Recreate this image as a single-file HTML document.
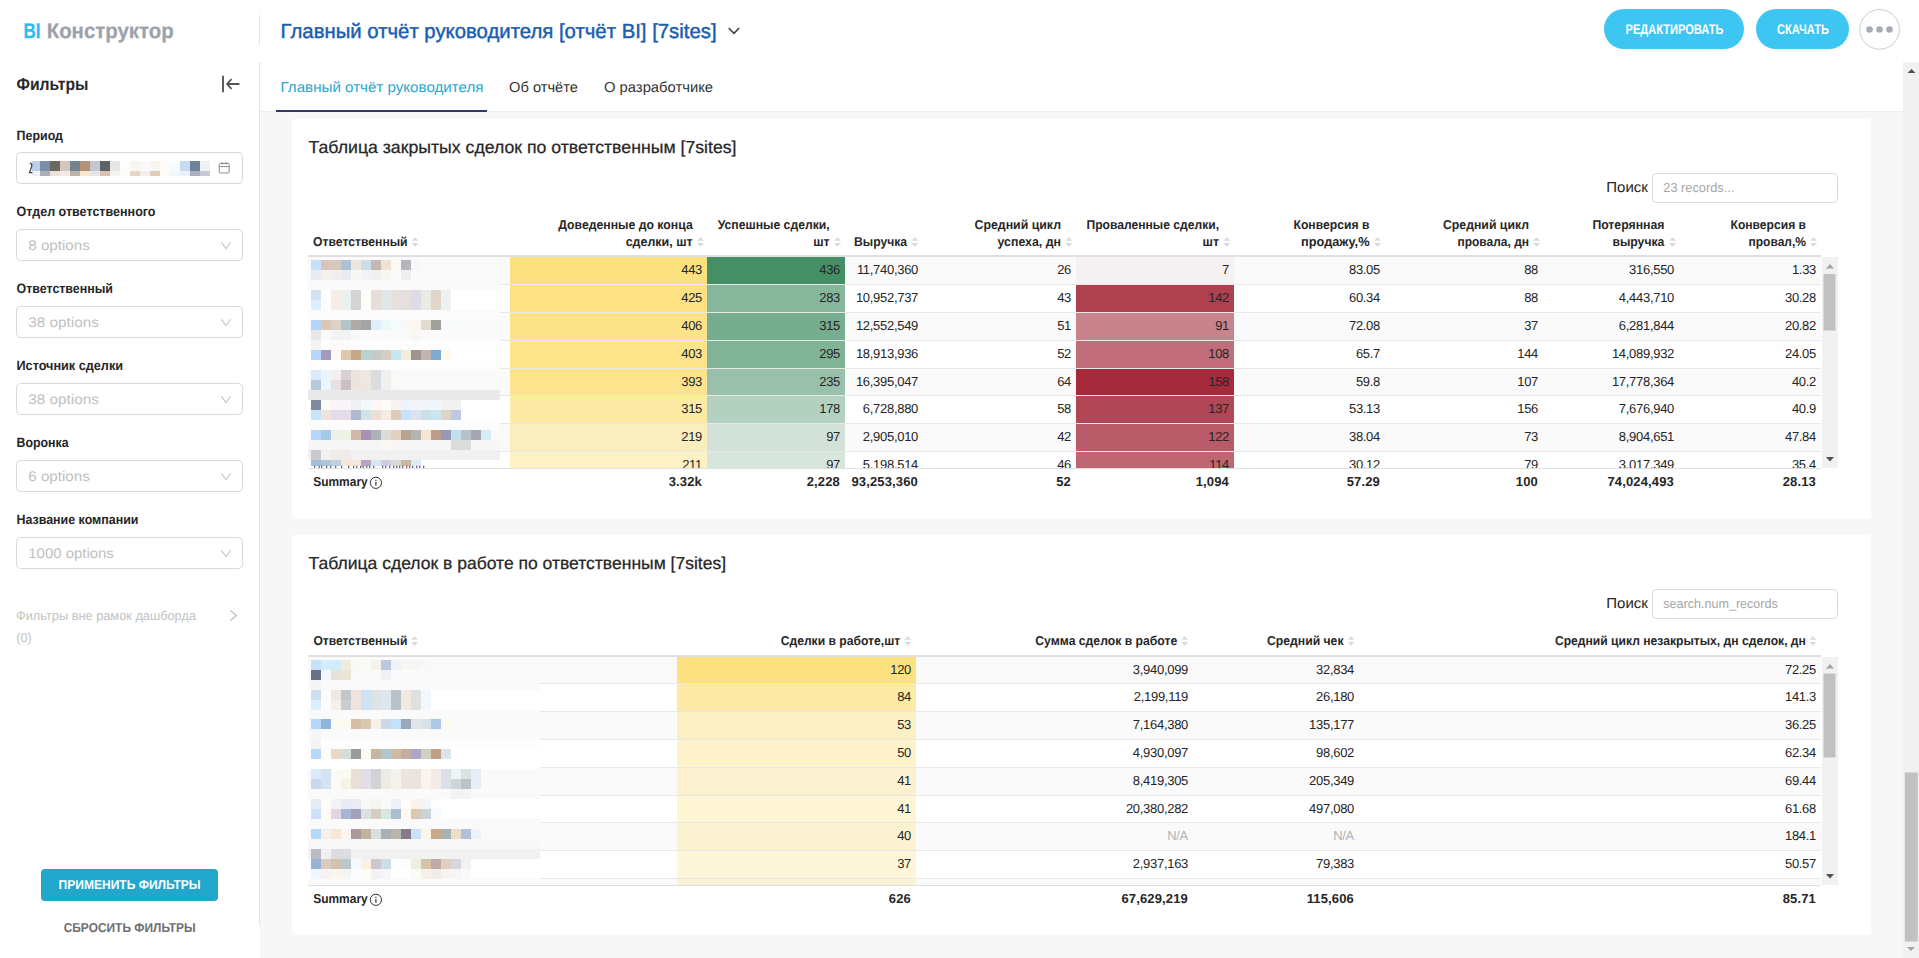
<!DOCTYPE html>
<html lang="ru"><head><meta charset="utf-8"><title>BI Конструктор</title>
<style>
html,body{margin:0;padding:0;width:1919px;height:958px;overflow:hidden;background:#fff}
svg{display:block;font-family:'Liberation Sans', sans-serif;text-rendering:geometricPrecision}
</style></head><body>
<svg width="1919" height="958" viewBox="0 0 1919 958">
<rect x="0" y="0" width="1919" height="958" fill="#ffffff"/>
<rect x="260" y="112" width="1643" height="846" fill="#f7f7f7"/>
<line x1="260" y1="111.5" x2="1903" y2="111.5" stroke="#efefef" stroke-width="1"/>
<rect x="276" y="110" width="211" height="2" fill="#2f3a6b"/>
<line x1="259.5" y1="62" x2="259.5" y2="925" stroke="#e3e3e3" stroke-width="1"/>
<line x1="259.5" y1="15" x2="259.5" y2="45" stroke="#e3e3e3" stroke-width="1"/>
<text x="23.6" y="38" font-size="21.2" fill="#2cbcef" font-weight="700" textLength="17" lengthAdjust="spacingAndGlyphs" stroke="#2cbcef" stroke-width="0.25">BI</text>
<text x="46.7" y="38" font-size="21.2" fill="#9ca2aa" font-weight="700" textLength="127" lengthAdjust="spacingAndGlyphs" stroke="#9ca2aa" stroke-width="0.25">Конструктор</text>
<text x="280.6" y="38.1" font-size="20.4" fill="#1b5daf" textLength="436" lengthAdjust="spacingAndGlyphs" stroke="#1b5daf" stroke-width="0.45">Главный отчёт руководителя [отчёт BI] [7sites]</text>
<path d="M729.2 28.5 L734 33.3 L738.7 28.5" fill="none" stroke="#3d4856" stroke-width="1.7" stroke-linecap="round" stroke-linejoin="round"/>
<rect x="1604" y="9" width="140" height="40" fill="#3ec6f3" rx="20"/>
<text x="1625.5" y="34.3" font-size="14" fill="#ffffff" font-weight="700" textLength="98" lengthAdjust="spacingAndGlyphs">РЕДАКТИРОВАТЬ</text>
<rect x="1756" y="9" width="93" height="40" fill="#3ec6f3" rx="20"/>
<text x="1777" y="34.3" font-size="14" fill="#ffffff" font-weight="700" textLength="52" lengthAdjust="spacingAndGlyphs">СКАЧАТЬ</text>
<circle cx="1879.6" cy="29.4" r="19.8" fill="#fff" stroke="#c9ced4" stroke-width="1"/>
<circle cx="1869.5" cy="29.5" r="3.3" fill="#a6acb3"/>
<circle cx="1879.5" cy="29.5" r="3.3" fill="#a6acb3"/>
<circle cx="1889.5" cy="29.5" r="3.3" fill="#a6acb3"/>
<text x="16.5" y="90.3" font-size="17.5" fill="#282828" font-weight="700" textLength="72" lengthAdjust="spacingAndGlyphs">Фильтры</text>
<path d="M223 76.5 L223 91.5" fill="none" stroke="#555" stroke-width="1.9" stroke-linecap="round"/>
<path d="M231 79.7 L227 84 L231 88.3 M227 84 L238.8 84" fill="none" stroke="#555" stroke-width="1.8" stroke-linecap="round" stroke-linejoin="round"/>
<text x="16.5" y="139.6" font-size="13.5" fill="#262626" font-weight="700" textLength="46.5" lengthAdjust="spacingAndGlyphs">Период</text>
<rect x="16.5" y="152.5" width="226" height="31" fill="#ffffff" rx="4" stroke="#d9d9d9" stroke-width="1"/>
<text x="16.5" y="215.8" font-size="13.5" fill="#262626" font-weight="700" textLength="139" lengthAdjust="spacingAndGlyphs">Отдел ответственного</text>
<rect x="16.5" y="229.5" width="226" height="31" fill="#ffffff" rx="4" stroke="#d9d9d9" stroke-width="1"/>
<text x="28.3" y="250" font-size="14" fill="#bfbfbf" textLength="61.5" lengthAdjust="spacingAndGlyphs">8 options</text>
<path d="M221.3 242.3 L226 248.6 L230.6 242.3" fill="none" stroke="#c4c4c4" stroke-width="1.1"/>
<text x="16.5" y="293.1" font-size="13.5" fill="#262626" font-weight="700" textLength="96.5" lengthAdjust="spacingAndGlyphs">Ответственный</text>
<rect x="16.5" y="306.5" width="226" height="31" fill="#ffffff" rx="4" stroke="#d9d9d9" stroke-width="1"/>
<text x="28.3" y="327" font-size="14" fill="#bfbfbf" textLength="70.5" lengthAdjust="spacingAndGlyphs">38 options</text>
<path d="M221.3 319.3 L226 325.6 L230.6 319.3" fill="none" stroke="#c4c4c4" stroke-width="1.1"/>
<text x="16.5" y="370.2" font-size="13.5" fill="#262626" font-weight="700" textLength="106.5" lengthAdjust="spacingAndGlyphs">Источник сделки</text>
<rect x="16.5" y="383.5" width="226" height="31" fill="#ffffff" rx="4" stroke="#d9d9d9" stroke-width="1"/>
<text x="28.3" y="404" font-size="14" fill="#bfbfbf" textLength="70.5" lengthAdjust="spacingAndGlyphs">38 options</text>
<path d="M221.3 396.3 L226 402.6 L230.6 396.3" fill="none" stroke="#c4c4c4" stroke-width="1.1"/>
<text x="16.5" y="447.2" font-size="13.5" fill="#262626" font-weight="700" textLength="52" lengthAdjust="spacingAndGlyphs">Воронка</text>
<rect x="16.5" y="460.5" width="226" height="31" fill="#ffffff" rx="4" stroke="#d9d9d9" stroke-width="1"/>
<text x="28.3" y="481" font-size="14" fill="#bfbfbf" textLength="61.5" lengthAdjust="spacingAndGlyphs">6 options</text>
<path d="M221.3 473.3 L226 479.6 L230.6 473.3" fill="none" stroke="#c4c4c4" stroke-width="1.1"/>
<text x="16.5" y="524.1" font-size="13.5" fill="#262626" font-weight="700" textLength="122" lengthAdjust="spacingAndGlyphs">Название компании</text>
<rect x="16.5" y="537.5" width="226" height="31" fill="#ffffff" rx="4" stroke="#d9d9d9" stroke-width="1"/>
<text x="28.3" y="558" font-size="14" fill="#bfbfbf" textLength="85.5" lengthAdjust="spacingAndGlyphs">1000 options</text>
<path d="M221.3 550.3 L226 556.6 L230.6 550.3" fill="none" stroke="#c4c4c4" stroke-width="1.1"/>
<rect x="32" y="161" width="8" height="10" fill="#b9d0e8"/>
<rect x="32" y="171" width="8" height="5" fill="#eef2f6"/>
<rect x="40" y="161" width="10" height="10" fill="#7b8ea8"/>
<rect x="40" y="171" width="10" height="5" fill="#aeadb8"/>
<rect x="50" y="161" width="10" height="10" fill="#6b6762"/>
<rect x="50" y="171" width="10" height="5" fill="#ede3da"/>
<rect x="60" y="161" width="10" height="10" fill="#d3c6ba"/>
<rect x="60" y="171" width="10" height="5" fill="#f2ebe3"/>
<rect x="70" y="161" width="10" height="10" fill="#758391"/>
<rect x="70" y="171" width="10" height="5" fill="#c0b3ad"/>
<rect x="80" y="161" width="10" height="10" fill="#b39377"/>
<rect x="80" y="171" width="10" height="5" fill="#fbe6d2"/>
<rect x="90" y="161" width="10" height="10" fill="#c5c7d0"/>
<rect x="90" y="171" width="10" height="5" fill="#e6e4e4"/>
<rect x="100" y="161" width="10" height="10" fill="#5e6265"/>
<rect x="100" y="171" width="10" height="5" fill="#d7c3b3"/>
<rect x="110" y="161" width="10" height="10" fill="#e7e6e5"/>
<rect x="110" y="171" width="10" height="5" fill="#f5f3f0"/>
<rect x="120" y="161" width="10" height="10" fill="#fdfdfd"/>
<rect x="120" y="171" width="10" height="5" fill="#fdfcfb"/>
<rect x="130" y="161" width="10" height="10" fill="#f8f6f3"/>
<rect x="130" y="171" width="10" height="5" fill="#e7d6c6"/>
<rect x="140" y="161" width="10" height="10" fill="#fbfafa"/>
<rect x="140" y="171" width="10" height="5" fill="#f4efeb"/>
<rect x="150" y="161" width="10" height="10" fill="#f8f4f0"/>
<rect x="150" y="171" width="10" height="5" fill="#e3cdb9"/>
<rect x="160" y="161" width="10" height="10" fill="#fffcf7"/>
<rect x="160" y="171" width="10" height="5" fill="#fefbf4"/>
<rect x="170" y="161" width="10" height="10" fill="#f6fbfd"/>
<rect x="170" y="171" width="10" height="5" fill="#eef8fd"/>
<rect x="180" y="161" width="10" height="10" fill="#c8dcef"/>
<rect x="180" y="171" width="10" height="5" fill="#e7f1f8"/>
<rect x="190" y="161" width="10" height="10" fill="#6d849b"/>
<rect x="190" y="171" width="10" height="5" fill="#adafbd"/>
<rect x="200" y="161" width="10" height="10" fill="#f1f1f4"/>
<rect x="200" y="171" width="10" height="5" fill="#c7c7d5"/>
<path d="M29.8 163.2 Q32.2 163.6 31.8 166.2 L29.6 172.6 L32.4 172.6" fill="none" stroke="#3a3a3a" stroke-width="1.2"/>
<rect x="219.2" y="163.4" width="10" height="9.6" fill="none" rx="1" stroke="#8c8c8c" stroke-width="1"/>
<line x1="219.2" y1="166.6" x2="229.2" y2="166.6" stroke="#8c8c8c" stroke-width="1"/>
<line x1="222.2" y1="162" x2="222.2" y2="164.5" stroke="#8c8c8c" stroke-width="1"/>
<line x1="226.2" y1="162" x2="226.2" y2="164.5" stroke="#8c8c8c" stroke-width="1"/>
<text x="16" y="620" font-size="13" fill="#c2c2c2" textLength="180" lengthAdjust="spacingAndGlyphs">Фильтры вне рамок дашборда</text>
<text x="16.3" y="642" font-size="13" fill="#c2c2c2" textLength="15.5" lengthAdjust="spacingAndGlyphs">(0)</text>
<path d="M230.3 610.5 L236.5 615.5 L230.3 620.5" fill="none" stroke="#bdbdbd" stroke-width="1.1"/>
<rect x="41" y="869" width="177" height="32" fill="#21a7cc" rx="4"/>
<text x="58.6" y="889" font-size="12.9" fill="#ffffff" font-weight="700" textLength="142" lengthAdjust="spacingAndGlyphs">ПРИМЕНИТЬ ФИЛЬТРЫ</text>
<text x="63.7" y="932" font-size="12.9" fill="#6e6e6e" font-weight="700" textLength="132" lengthAdjust="spacingAndGlyphs">СБРОСИТЬ ФИЛЬТРЫ</text>
<text x="280.5" y="92.3" font-size="14.5" fill="#2ba6cf" textLength="203" lengthAdjust="spacingAndGlyphs">Главный отчёт руководителя</text>
<text x="509" y="92.3" font-size="14.5" fill="#333333" textLength="69" lengthAdjust="spacingAndGlyphs">Об отчёте</text>
<text x="604" y="92.3" font-size="14.5" fill="#333333" textLength="109" lengthAdjust="spacingAndGlyphs">О разработчике</text>
<rect x="1903" y="62" width="16" height="896" fill="#f1f1f1"/>
<path d="M1907.5 73 L1911.5 69 L1915.5 73 Z" fill="#505050"/>
<rect x="1904.8" y="772.5" width="13" height="169" fill="#c1c1c1"/>
<path d="M1907 947 L1911 951 L1915 947 Z" fill="#a3a3a3"/>
<rect x="292" y="119" width="1579" height="400" fill="#ffffff" rx="4"/>
<rect x="292" y="535" width="1579" height="400" fill="#ffffff" rx="4"/>
<text x="308.5" y="153" font-size="17.4" fill="#262626" textLength="428" lengthAdjust="spacingAndGlyphs" stroke="#262626" stroke-width="0.25">Таблица закрытых сделок по ответственным [7sites]</text>
<text x="308.6" y="569" font-size="17.4" fill="#262626" textLength="417.5" lengthAdjust="spacingAndGlyphs" stroke="#262626" stroke-width="0.25">Таблица сделок в работе по ответственным [7sites]</text>
<text x="1606.3" y="192" font-size="14.5" fill="#262626" textLength="41.5" lengthAdjust="spacingAndGlyphs">Поиск</text>
<rect x="1652.5" y="173.5" width="185" height="29" fill="#ffffff" rx="4" stroke="#d9d9d9" stroke-width="1"/>
<text x="1663.3" y="192" font-size="13" fill="#a6a6a6" textLength="71" lengthAdjust="spacingAndGlyphs">23 records...</text>
<text x="1606.3" y="608" font-size="14.5" fill="#262626" textLength="41.5" lengthAdjust="spacingAndGlyphs">Поиск</text>
<rect x="1652.5" y="589.5" width="185" height="29" fill="#ffffff" rx="4" stroke="#d9d9d9" stroke-width="1"/>
<text x="1663.3" y="608" font-size="13" fill="#a6a6a6" textLength="114.5" lengthAdjust="spacingAndGlyphs">search.num_records</text>
<clipPath id="c1"><rect x="300" y="257" width="1530" height="211"/></clipPath>
<g clip-path="url(#c1)">
<rect x="308" y="257" width="1513" height="27" fill="#fafafa"/>
<rect x="510" y="257" width="197" height="27" fill="#fce180"/>
<rect x="707" y="257" width="138" height="27" fill="#458f66"/>
<rect x="1076" y="257" width="158" height="27" fill="#f6f1f2"/>
<text x="702" y="274" font-size="13" fill="#262626" text-anchor="end" letter-spacing="-0.3">443</text>
<text x="840" y="274" font-size="13" fill="#262626" text-anchor="end" letter-spacing="-0.3">436</text>
<text x="918" y="274" font-size="13" fill="#262626" text-anchor="end" letter-spacing="-0.3">11,740,360</text>
<text x="1071" y="274" font-size="13" fill="#262626" text-anchor="end" letter-spacing="-0.3">26</text>
<text x="1229" y="274" font-size="13" fill="#262626" text-anchor="end" letter-spacing="-0.3">7</text>
<text x="1380" y="274" font-size="13" fill="#262626" text-anchor="end" letter-spacing="-0.3">83.05</text>
<text x="1538" y="274" font-size="13" fill="#262626" text-anchor="end" letter-spacing="-0.3">88</text>
<text x="1674" y="274" font-size="13" fill="#262626" text-anchor="end" letter-spacing="-0.3">316,550</text>
<text x="1816" y="274" font-size="13" fill="#262626" text-anchor="end" letter-spacing="-0.3">1.33</text>
<rect x="308" y="285" width="1513" height="27" fill="#ffffff"/>
<rect x="510" y="285" width="197" height="27" fill="#fce285"/>
<rect x="707" y="285" width="138" height="27" fill="#86b69c"/>
<rect x="1076" y="285" width="158" height="27" fill="#ae4050"/>
<text x="702" y="302" font-size="13" fill="#262626" text-anchor="end" letter-spacing="-0.3">425</text>
<text x="840" y="302" font-size="13" fill="#262626" text-anchor="end" letter-spacing="-0.3">283</text>
<text x="918" y="302" font-size="13" fill="#262626" text-anchor="end" letter-spacing="-0.3">10,952,737</text>
<text x="1071" y="302" font-size="13" fill="#262626" text-anchor="end" letter-spacing="-0.3">43</text>
<text x="1229" y="302" font-size="13" fill="#262626" text-anchor="end" letter-spacing="-0.3">142</text>
<text x="1380" y="302" font-size="13" fill="#262626" text-anchor="end" letter-spacing="-0.3">60.34</text>
<text x="1538" y="302" font-size="13" fill="#262626" text-anchor="end" letter-spacing="-0.3">88</text>
<text x="1674" y="302" font-size="13" fill="#262626" text-anchor="end" letter-spacing="-0.3">4,443,710</text>
<text x="1816" y="302" font-size="13" fill="#262626" text-anchor="end" letter-spacing="-0.3">30.28</text>
<rect x="308" y="313" width="1513" height="27" fill="#fafafa"/>
<rect x="510" y="313" width="197" height="27" fill="#fce38a"/>
<rect x="707" y="313" width="138" height="27" fill="#77ad8f"/>
<rect x="1076" y="313" width="158" height="27" fill="#c9838d"/>
<text x="702" y="330" font-size="13" fill="#262626" text-anchor="end" letter-spacing="-0.3">406</text>
<text x="840" y="330" font-size="13" fill="#262626" text-anchor="end" letter-spacing="-0.3">315</text>
<text x="918" y="330" font-size="13" fill="#262626" text-anchor="end" letter-spacing="-0.3">12,552,549</text>
<text x="1071" y="330" font-size="13" fill="#262626" text-anchor="end" letter-spacing="-0.3">51</text>
<text x="1229" y="330" font-size="13" fill="#262626" text-anchor="end" letter-spacing="-0.3">91</text>
<text x="1380" y="330" font-size="13" fill="#262626" text-anchor="end" letter-spacing="-0.3">72.08</text>
<text x="1538" y="330" font-size="13" fill="#262626" text-anchor="end" letter-spacing="-0.3">37</text>
<text x="1674" y="330" font-size="13" fill="#262626" text-anchor="end" letter-spacing="-0.3">6,281,844</text>
<text x="1816" y="330" font-size="13" fill="#262626" text-anchor="end" letter-spacing="-0.3">20.82</text>
<rect x="308" y="341" width="1513" height="27" fill="#ffffff"/>
<rect x="510" y="341" width="197" height="27" fill="#fce48b"/>
<rect x="707" y="341" width="138" height="27" fill="#81b397"/>
<rect x="1076" y="341" width="158" height="27" fill="#c16e7a"/>
<text x="702" y="358" font-size="13" fill="#262626" text-anchor="end" letter-spacing="-0.3">403</text>
<text x="840" y="358" font-size="13" fill="#262626" text-anchor="end" letter-spacing="-0.3">295</text>
<text x="918" y="358" font-size="13" fill="#262626" text-anchor="end" letter-spacing="-0.3">18,913,936</text>
<text x="1071" y="358" font-size="13" fill="#262626" text-anchor="end" letter-spacing="-0.3">52</text>
<text x="1229" y="358" font-size="13" fill="#262626" text-anchor="end" letter-spacing="-0.3">108</text>
<text x="1380" y="358" font-size="13" fill="#262626" text-anchor="end" letter-spacing="-0.3">65.7</text>
<text x="1538" y="358" font-size="13" fill="#262626" text-anchor="end" letter-spacing="-0.3">144</text>
<text x="1674" y="358" font-size="13" fill="#262626" text-anchor="end" letter-spacing="-0.3">14,089,932</text>
<text x="1816" y="358" font-size="13" fill="#262626" text-anchor="end" letter-spacing="-0.3">24.05</text>
<rect x="308" y="369" width="1513" height="26" fill="#fafafa"/>
<rect x="510" y="369" width="197" height="26" fill="#fce48e"/>
<rect x="707" y="369" width="138" height="26" fill="#98c0aa"/>
<rect x="1076" y="369" width="158" height="26" fill="#a52b3c"/>
<text x="702" y="386" font-size="13" fill="#262626" text-anchor="end" letter-spacing="-0.3">393</text>
<text x="840" y="386" font-size="13" fill="#262626" text-anchor="end" letter-spacing="-0.3">235</text>
<text x="918" y="386" font-size="13" fill="#262626" text-anchor="end" letter-spacing="-0.3">16,395,047</text>
<text x="1071" y="386" font-size="13" fill="#262626" text-anchor="end" letter-spacing="-0.3">64</text>
<text x="1229" y="386" font-size="13" fill="#262626" text-anchor="end" letter-spacing="-0.3">158</text>
<text x="1380" y="386" font-size="13" fill="#262626" text-anchor="end" letter-spacing="-0.3">59.8</text>
<text x="1538" y="386" font-size="13" fill="#262626" text-anchor="end" letter-spacing="-0.3">107</text>
<text x="1674" y="386" font-size="13" fill="#262626" text-anchor="end" letter-spacing="-0.3">17,778,364</text>
<text x="1816" y="386" font-size="13" fill="#262626" text-anchor="end" letter-spacing="-0.3">40.2</text>
<rect x="308" y="396" width="1513" height="27" fill="#ffffff"/>
<rect x="510" y="396" width="197" height="27" fill="#fdeaa5"/>
<rect x="707" y="396" width="138" height="27" fill="#b3d1c1"/>
<rect x="1076" y="396" width="158" height="27" fill="#b14756"/>
<text x="702" y="413" font-size="13" fill="#262626" text-anchor="end" letter-spacing="-0.3">315</text>
<text x="840" y="413" font-size="13" fill="#262626" text-anchor="end" letter-spacing="-0.3">178</text>
<text x="918" y="413" font-size="13" fill="#262626" text-anchor="end" letter-spacing="-0.3">6,728,880</text>
<text x="1071" y="413" font-size="13" fill="#262626" text-anchor="end" letter-spacing="-0.3">58</text>
<text x="1229" y="413" font-size="13" fill="#262626" text-anchor="end" letter-spacing="-0.3">137</text>
<text x="1380" y="413" font-size="13" fill="#262626" text-anchor="end" letter-spacing="-0.3">53.13</text>
<text x="1538" y="413" font-size="13" fill="#262626" text-anchor="end" letter-spacing="-0.3">156</text>
<text x="1674" y="413" font-size="13" fill="#262626" text-anchor="end" letter-spacing="-0.3">7,676,940</text>
<text x="1816" y="413" font-size="13" fill="#262626" text-anchor="end" letter-spacing="-0.3">40.9</text>
<rect x="308" y="424" width="1513" height="27" fill="#fafafa"/>
<rect x="510" y="424" width="197" height="27" fill="#fbeebe"/>
<rect x="707" y="424" width="138" height="27" fill="#d2e2d9"/>
<rect x="1076" y="424" width="158" height="27" fill="#b85a67"/>
<text x="702" y="441" font-size="13" fill="#262626" text-anchor="end" letter-spacing="-0.3">219</text>
<text x="840" y="441" font-size="13" fill="#262626" text-anchor="end" letter-spacing="-0.3">97</text>
<text x="918" y="441" font-size="13" fill="#262626" text-anchor="end" letter-spacing="-0.3">2,905,010</text>
<text x="1071" y="441" font-size="13" fill="#262626" text-anchor="end" letter-spacing="-0.3">42</text>
<text x="1229" y="441" font-size="13" fill="#262626" text-anchor="end" letter-spacing="-0.3">122</text>
<text x="1380" y="441" font-size="13" fill="#262626" text-anchor="end" letter-spacing="-0.3">38.04</text>
<text x="1538" y="441" font-size="13" fill="#262626" text-anchor="end" letter-spacing="-0.3">73</text>
<text x="1674" y="441" font-size="13" fill="#262626" text-anchor="end" letter-spacing="-0.3">8,904,651</text>
<text x="1816" y="441" font-size="13" fill="#262626" text-anchor="end" letter-spacing="-0.3">47.84</text>
<rect x="308" y="452" width="1513" height="16" fill="#ffffff"/>
<rect x="510" y="452" width="197" height="16" fill="#fef1c3"/>
<rect x="707" y="452" width="138" height="16" fill="#d6e6dd"/>
<rect x="1076" y="452" width="158" height="16" fill="#be6672"/>
<text x="702" y="469" font-size="13" fill="#262626" text-anchor="end" letter-spacing="-0.3">211</text>
<text x="840" y="469" font-size="13" fill="#262626" text-anchor="end" letter-spacing="-0.3">97</text>
<text x="918" y="469" font-size="13" fill="#262626" text-anchor="end" letter-spacing="-0.3">5,198,514</text>
<text x="1071" y="469" font-size="13" fill="#262626" text-anchor="end" letter-spacing="-0.3">46</text>
<text x="1229" y="469" font-size="13" fill="#262626" text-anchor="end" letter-spacing="-0.3">114</text>
<text x="1380" y="469" font-size="13" fill="#262626" text-anchor="end" letter-spacing="-0.3">30.12</text>
<text x="1538" y="469" font-size="13" fill="#262626" text-anchor="end" letter-spacing="-0.3">79</text>
<text x="1674" y="469" font-size="13" fill="#262626" text-anchor="end" letter-spacing="-0.3">3,017,349</text>
<text x="1816" y="469" font-size="13" fill="#262626" text-anchor="end" letter-spacing="-0.3">35.4</text>
<rect x="308" y="284" width="1513" height="1" fill="#e8e8e8"/>
<rect x="308" y="312" width="1513" height="1" fill="#e8e8e8"/>
<rect x="308" y="340" width="1513" height="1" fill="#e8e8e8"/>
<rect x="308" y="368" width="1513" height="1" fill="#e8e8e8"/>
<rect x="308" y="395" width="1513" height="1" fill="#e8e8e8"/>
<rect x="308" y="423" width="1513" height="1" fill="#e8e8e8"/>
<rect x="308" y="451" width="1513" height="1" fill="#e8e8e8"/>
</g>
<rect x="308" y="255" width="1513" height="2" fill="#e0e0e0"/>
<rect x="308" y="468" width="1513" height="1" fill="#e0e0e0"/>
<text x="313.1" y="246" font-size="12.8" fill="#262626" font-weight="700" textLength="94.5" lengthAdjust="spacingAndGlyphs">Ответственный</text>
<path d="M411.5 240.7 L418.5 240.7 L415.0 237.2 Z" fill="#dadada"/>
<path d="M411.5 243 L418.5 243 L415.0 246.8 Z" fill="#dadada"/>
<text x="692.7" y="229" font-size="12.8" fill="#262626" font-weight="700" text-anchor="end" textLength="134.5" lengthAdjust="spacingAndGlyphs">Доведенные до конца</text>
<text x="692.7" y="246" font-size="12.8" fill="#262626" font-weight="700" text-anchor="end" textLength="67" lengthAdjust="spacingAndGlyphs">сделки, шт</text>
<path d="M697 240.7 L704 240.7 L700.5 237.2 Z" fill="#dadada"/>
<path d="M697 243 L704 243 L700.5 246.8 Z" fill="#dadada"/>
<text x="829.7" y="229" font-size="12.8" fill="#262626" font-weight="700" text-anchor="end" textLength="112" lengthAdjust="spacingAndGlyphs">Успешные сделки,</text>
<text x="829.7" y="246" font-size="12.8" fill="#262626" font-weight="700" text-anchor="end" textLength="16.5" lengthAdjust="spacingAndGlyphs">шт</text>
<path d="M834 240.7 L841 240.7 L837.5 237.2 Z" fill="#dadada"/>
<path d="M834 243 L841 243 L837.5 246.8 Z" fill="#dadada"/>
<text x="907" y="246" font-size="12.8" fill="#262626" font-weight="700" text-anchor="end" textLength="53" lengthAdjust="spacingAndGlyphs">Выручка</text>
<path d="M911.4 240.7 L918.4 240.7 L914.9 237.2 Z" fill="#dadada"/>
<path d="M911.4 243 L918.4 243 L914.9 246.8 Z" fill="#dadada"/>
<text x="1061" y="229" font-size="12.8" fill="#262626" font-weight="700" text-anchor="end" textLength="86.5" lengthAdjust="spacingAndGlyphs">Средний цикл</text>
<text x="1061" y="246" font-size="12.8" fill="#262626" font-weight="700" text-anchor="end" textLength="63.5" lengthAdjust="spacingAndGlyphs">успеха, дн</text>
<path d="M1065.3 240.7 L1072.3 240.7 L1068.8 237.2 Z" fill="#dadada"/>
<path d="M1065.3 243 L1072.3 243 L1068.8 246.8 Z" fill="#dadada"/>
<text x="1219" y="229" font-size="12.8" fill="#262626" font-weight="700" text-anchor="end" textLength="132.5" lengthAdjust="spacingAndGlyphs">Проваленные сделки,</text>
<text x="1219" y="246" font-size="12.8" fill="#262626" font-weight="700" text-anchor="end" textLength="16.5" lengthAdjust="spacingAndGlyphs">шт</text>
<path d="M1223.3 240.7 L1230.3 240.7 L1226.8 237.2 Z" fill="#dadada"/>
<path d="M1223.3 243 L1230.3 243 L1226.8 246.8 Z" fill="#dadada"/>
<text x="1369.5" y="229" font-size="12.8" fill="#262626" font-weight="700" text-anchor="end" textLength="76" lengthAdjust="spacingAndGlyphs">Конверсия в</text>
<text x="1369.5" y="246" font-size="12.8" fill="#262626" font-weight="700" text-anchor="end" textLength="68.5" lengthAdjust="spacingAndGlyphs">продажу,%</text>
<path d="M1374 240.7 L1381 240.7 L1377.5 237.2 Z" fill="#dadada"/>
<path d="M1374 243 L1381 243 L1377.5 246.8 Z" fill="#dadada"/>
<text x="1529" y="229" font-size="12.8" fill="#262626" font-weight="700" text-anchor="end" textLength="86" lengthAdjust="spacingAndGlyphs">Средний цикл</text>
<text x="1529" y="246" font-size="12.8" fill="#262626" font-weight="700" text-anchor="end" textLength="71.5" lengthAdjust="spacingAndGlyphs">провала, дн</text>
<path d="M1533 240.7 L1540 240.7 L1536.5 237.2 Z" fill="#dadada"/>
<path d="M1533 243 L1540 243 L1536.5 246.8 Z" fill="#dadada"/>
<text x="1664.4" y="229" font-size="12.8" fill="#262626" font-weight="700" text-anchor="end" textLength="72" lengthAdjust="spacingAndGlyphs">Потерянная</text>
<text x="1664.4" y="246" font-size="12.8" fill="#262626" font-weight="700" text-anchor="end" textLength="52" lengthAdjust="spacingAndGlyphs">выручка</text>
<path d="M1669 240.7 L1676 240.7 L1672.5 237.2 Z" fill="#dadada"/>
<path d="M1669 243 L1676 243 L1672.5 246.8 Z" fill="#dadada"/>
<text x="1806" y="229" font-size="12.8" fill="#262626" font-weight="700" text-anchor="end" textLength="75.5" lengthAdjust="spacingAndGlyphs">Конверсия в</text>
<text x="1806" y="246" font-size="12.8" fill="#262626" font-weight="700" text-anchor="end" textLength="57.5" lengthAdjust="spacingAndGlyphs">провал,%</text>
<path d="M1810 240.7 L1817 240.7 L1813.5 237.2 Z" fill="#dadada"/>
<path d="M1810 243 L1817 243 L1813.5 246.8 Z" fill="#dadada"/>
<text x="313.2" y="486.3" font-size="13" fill="#262626" font-weight="700" textLength="54.5" lengthAdjust="spacingAndGlyphs">Summary</text>
<circle cx="375.9" cy="482.8" r="5.6" fill="none" stroke="#333" stroke-width="1"/>
<rect x="375.3" y="482" width="1.2" height="3.6" fill="#333"/>
<rect x="375.3" y="479.8" width="1.2" height="1.2" fill="#333"/>
<text x="702" y="486.3" font-size="13" fill="#262626" font-weight="700" text-anchor="end" letter-spacing="0.15">3.32k</text>
<text x="840" y="486.3" font-size="13" fill="#262626" font-weight="700" text-anchor="end" letter-spacing="0.15">2,228</text>
<text x="918" y="486.3" font-size="13" fill="#262626" font-weight="700" text-anchor="end" letter-spacing="0.15">93,253,360</text>
<text x="1071" y="486.3" font-size="13" fill="#262626" font-weight="700" text-anchor="end" letter-spacing="0.15">52</text>
<text x="1229" y="486.3" font-size="13" fill="#262626" font-weight="700" text-anchor="end" letter-spacing="0.15">1,094</text>
<text x="1380" y="486.3" font-size="13" fill="#262626" font-weight="700" text-anchor="end" letter-spacing="0.15">57.29</text>
<text x="1538" y="486.3" font-size="13" fill="#262626" font-weight="700" text-anchor="end" letter-spacing="0.15">100</text>
<text x="1674" y="486.3" font-size="13" fill="#262626" font-weight="700" text-anchor="end" letter-spacing="0.15">74,024,493</text>
<text x="1816" y="486.3" font-size="13" fill="#262626" font-weight="700" text-anchor="end" letter-spacing="0.15">28.13</text>
<rect x="1822" y="257" width="16" height="211" fill="#f1f1f1"/>
<path d="M1826 268.4 L1830 264 L1834 268.4 Z" fill="#a3a3a3"/>
<rect x="1823.5" y="274" width="12" height="56.5" fill="#c1c1c1"/>
<path d="M1826 457 L1830 461.4 L1834 457 Z" fill="#505050"/>
<clipPath id="c2"><rect x="300" y="657" width="1530" height="228"/></clipPath>
<g clip-path="url(#c2)">
<rect x="308" y="657" width="1513" height="26" fill="#fafafa"/>
<rect x="677" y="657" width="239" height="26" fill="#fce180"/>
<text x="911" y="674" font-size="13" fill="#262626" text-anchor="end" letter-spacing="-0.3">120</text>
<text x="1188" y="674" font-size="13" fill="#262626" text-anchor="end" letter-spacing="-0.3">3,940,099</text>
<text x="1354" y="674" font-size="13" fill="#262626" text-anchor="end" letter-spacing="-0.3">32,834</text>
<text x="1816" y="674" font-size="13" fill="#262626" text-anchor="end" letter-spacing="-0.3">72.25</text>
<rect x="308" y="684" width="1513" height="27" fill="#ffffff"/>
<rect x="677" y="684" width="239" height="27" fill="#fdeaa6"/>
<text x="911" y="701" font-size="13" fill="#262626" text-anchor="end" letter-spacing="-0.3">84</text>
<text x="1188" y="701" font-size="13" fill="#262626" text-anchor="end" letter-spacing="-0.3">2,199,119</text>
<text x="1354" y="701" font-size="13" fill="#262626" text-anchor="end" letter-spacing="-0.3">26,180</text>
<text x="1816" y="701" font-size="13" fill="#262626" text-anchor="end" letter-spacing="-0.3">141.3</text>
<rect x="308" y="712" width="1513" height="27" fill="#fafafa"/>
<rect x="677" y="712" width="239" height="27" fill="#fbefc4"/>
<text x="911" y="729" font-size="13" fill="#262626" text-anchor="end" letter-spacing="-0.3">53</text>
<text x="1188" y="729" font-size="13" fill="#262626" text-anchor="end" letter-spacing="-0.3">7,164,380</text>
<text x="1354" y="729" font-size="13" fill="#262626" text-anchor="end" letter-spacing="-0.3">135,177</text>
<text x="1816" y="729" font-size="13" fill="#262626" text-anchor="end" letter-spacing="-0.3">36.25</text>
<rect x="308" y="740" width="1513" height="27" fill="#ffffff"/>
<rect x="677" y="740" width="239" height="27" fill="#fef2ca"/>
<text x="911" y="757" font-size="13" fill="#262626" text-anchor="end" letter-spacing="-0.3">50</text>
<text x="1188" y="757" font-size="13" fill="#262626" text-anchor="end" letter-spacing="-0.3">4,930,097</text>
<text x="1354" y="757" font-size="13" fill="#262626" text-anchor="end" letter-spacing="-0.3">98,602</text>
<text x="1816" y="757" font-size="13" fill="#262626" text-anchor="end" letter-spacing="-0.3">62.34</text>
<rect x="308" y="768" width="1513" height="27" fill="#fafafa"/>
<rect x="677" y="768" width="239" height="27" fill="#fbf1d0"/>
<text x="911" y="785" font-size="13" fill="#262626" text-anchor="end" letter-spacing="-0.3">41</text>
<text x="1188" y="785" font-size="13" fill="#262626" text-anchor="end" letter-spacing="-0.3">8,419,305</text>
<text x="1354" y="785" font-size="13" fill="#262626" text-anchor="end" letter-spacing="-0.3">205,349</text>
<text x="1816" y="785" font-size="13" fill="#262626" text-anchor="end" letter-spacing="-0.3">69.44</text>
<rect x="308" y="796" width="1513" height="26" fill="#ffffff"/>
<rect x="677" y="796" width="239" height="26" fill="#fef5d4"/>
<text x="911" y="813" font-size="13" fill="#262626" text-anchor="end" letter-spacing="-0.3">41</text>
<text x="1188" y="813" font-size="13" fill="#262626" text-anchor="end" letter-spacing="-0.3">20,380,282</text>
<text x="1354" y="813" font-size="13" fill="#262626" text-anchor="end" letter-spacing="-0.3">497,080</text>
<text x="1816" y="813" font-size="13" fill="#262626" text-anchor="end" letter-spacing="-0.3">61.68</text>
<rect x="308" y="823" width="1513" height="27" fill="#fafafa"/>
<rect x="677" y="823" width="239" height="27" fill="#fbf2d1"/>
<text x="911" y="840" font-size="13" fill="#262626" text-anchor="end" letter-spacing="-0.3">40</text>
<text x="1188" y="840" font-size="13" fill="#b3b3b3" text-anchor="end" letter-spacing="-0.3">N/A</text>
<text x="1354" y="840" font-size="13" fill="#b3b3b3" text-anchor="end" letter-spacing="-0.3">N/A</text>
<text x="1816" y="840" font-size="13" fill="#262626" text-anchor="end" letter-spacing="-0.3">184.1</text>
<rect x="308" y="851" width="1513" height="27" fill="#ffffff"/>
<rect x="677" y="851" width="239" height="27" fill="#fef6d8"/>
<text x="911" y="868" font-size="13" fill="#262626" text-anchor="end" letter-spacing="-0.3">37</text>
<text x="1188" y="868" font-size="13" fill="#262626" text-anchor="end" letter-spacing="-0.3">2,937,163</text>
<text x="1354" y="868" font-size="13" fill="#262626" text-anchor="end" letter-spacing="-0.3">79,383</text>
<text x="1816" y="868" font-size="13" fill="#262626" text-anchor="end" letter-spacing="-0.3">50.57</text>
<rect x="308" y="879" width="1513" height="6" fill="#fafafa"/>
<rect x="677" y="879" width="239" height="6" fill="#fbf3d6"/>
<rect x="308" y="683" width="1513" height="1" fill="#e8e8e8"/>
<rect x="308" y="711" width="1513" height="1" fill="#e8e8e8"/>
<rect x="308" y="739" width="1513" height="1" fill="#e8e8e8"/>
<rect x="308" y="767" width="1513" height="1" fill="#e8e8e8"/>
<rect x="308" y="795" width="1513" height="1" fill="#e8e8e8"/>
<rect x="308" y="822" width="1513" height="1" fill="#e8e8e8"/>
<rect x="308" y="850" width="1513" height="1" fill="#e8e8e8"/>
<rect x="308" y="878" width="1513" height="1" fill="#e8e8e8"/>
</g>
<rect x="308" y="655" width="1513" height="2" fill="#e0e0e0"/>
<rect x="308" y="885" width="1513" height="1" fill="#e0e0e0"/>
<text x="313.4" y="645" font-size="12.8" fill="#262626" font-weight="700" textLength="94" lengthAdjust="spacingAndGlyphs">Ответственный</text>
<path d="M411 639.7 L418 639.7 L414.5 636.2 Z" fill="#dadada"/>
<path d="M411 642 L418 642 L414.5 645.8 Z" fill="#dadada"/>
<text x="900.2" y="645" font-size="12.8" fill="#262626" font-weight="700" text-anchor="end" textLength="119.5" lengthAdjust="spacingAndGlyphs">Сделки в работе,шт</text>
<path d="M904.3 639.7 L911.3 639.7 L907.8 636.2 Z" fill="#dadada"/>
<path d="M904.3 642 L911.3 642 L907.8 645.8 Z" fill="#dadada"/>
<text x="1177.3" y="645" font-size="12.8" fill="#262626" font-weight="700" text-anchor="end" textLength="142" lengthAdjust="spacingAndGlyphs">Сумма сделок в работе</text>
<path d="M1181.3 639.7 L1188.3 639.7 L1184.8 636.2 Z" fill="#dadada"/>
<path d="M1181.3 642 L1188.3 642 L1184.8 645.8 Z" fill="#dadada"/>
<text x="1343.5" y="645" font-size="12.8" fill="#262626" font-weight="700" text-anchor="end" textLength="76.5" lengthAdjust="spacingAndGlyphs">Средний чек</text>
<path d="M1347.5 639.7 L1354.5 639.7 L1351.0 636.2 Z" fill="#dadada"/>
<path d="M1347.5 642 L1354.5 642 L1351.0 645.8 Z" fill="#dadada"/>
<text x="1805.9" y="645" font-size="12.8" fill="#262626" font-weight="700" text-anchor="end" textLength="251" lengthAdjust="spacingAndGlyphs">Средний цикл незакрытых, дн сделок, дн</text>
<path d="M1809.4 639.7 L1816.4 639.7 L1812.9 636.2 Z" fill="#dadada"/>
<path d="M1809.4 642 L1816.4 642 L1812.9 645.8 Z" fill="#dadada"/>
<text x="313.2" y="903.3" font-size="13" fill="#262626" font-weight="700" textLength="54.5" lengthAdjust="spacingAndGlyphs">Summary</text>
<circle cx="375.9" cy="899.8" r="5.6" fill="none" stroke="#333" stroke-width="1"/>
<rect x="375.3" y="899" width="1.2" height="3.6" fill="#333"/>
<rect x="375.3" y="896.8" width="1.2" height="1.2" fill="#333"/>
<text x="911" y="903.3" font-size="13" fill="#262626" font-weight="700" text-anchor="end" letter-spacing="0.15">626</text>
<text x="1188" y="903.3" font-size="13" fill="#262626" font-weight="700" text-anchor="end" letter-spacing="0.15">67,629,219</text>
<text x="1354" y="903.3" font-size="13" fill="#262626" font-weight="700" text-anchor="end" letter-spacing="0.15">115,606</text>
<text x="1816" y="903.3" font-size="13" fill="#262626" font-weight="700" text-anchor="end" letter-spacing="0.15">85.71</text>
<rect x="1822" y="657" width="16" height="228" fill="#f1f1f1"/>
<path d="M1826 668.4 L1830 664 L1834 668.4 Z" fill="#a3a3a3"/>
<rect x="1823.5" y="673.5" width="12" height="84" fill="#c1c1c1"/>
<path d="M1826 874 L1830 878.4 L1834 874 Z" fill="#505050"/>
<rect x="308" y="257" width="192" height="209" fill="#fafafa"/>
<rect x="308" y="257" width="192" height="13" fill="#fafafa"/>
<rect x="311" y="260" width="10" height="10" fill="#c5e0f8"/>
<rect x="321" y="260" width="10" height="10" fill="#d6c5b8"/>
<rect x="331" y="260" width="10" height="10" fill="#d5c8bc"/>
<rect x="341" y="260" width="10" height="10" fill="#afc2d5"/>
<rect x="351" y="260" width="10" height="10" fill="#ebe6df"/>
<rect x="361" y="260" width="10" height="10" fill="#cbdcea"/>
<rect x="371" y="260" width="10" height="10" fill="#c4bab3"/>
<rect x="381" y="260" width="10" height="10" fill="#eee2d2"/>
<rect x="391" y="260" width="10" height="10" fill="#fbf9f3"/>
<rect x="401" y="260" width="10" height="10" fill="#b5b6bb"/>
<rect x="411" y="260" width="10" height="10" fill="#f4f8fc"/>
<rect x="308" y="270" width="192" height="10" fill="#fafafa"/>
<rect x="311" y="270" width="10" height="10" fill="#e8ecf2"/>
<rect x="321" y="270" width="10" height="10" fill="#f5f0ec"/>
<rect x="331" y="270" width="10" height="10" fill="#f0efed"/>
<rect x="341" y="270" width="10" height="10" fill="#e8ecf0"/>
<rect x="351" y="270" width="10" height="10" fill="#f7f7f4"/>
<rect x="361" y="270" width="10" height="10" fill="#f0f4f8"/>
<rect x="371" y="270" width="10" height="10" fill="#f2f0ee"/>
<rect x="381" y="270" width="10" height="10" fill="#f7f6f1"/>
<rect x="401" y="270" width="10" height="10" fill="#eef0ef"/>
<rect x="308" y="280" width="192" height="10" fill="#fafafa"/>
<rect x="308" y="290" width="192" height="10" fill="#ffffff"/>
<rect x="311" y="290" width="10" height="10" fill="#d2e2f3"/>
<rect x="321" y="290" width="10" height="10" fill="#fffdfb"/>
<rect x="331" y="290" width="10" height="10" fill="#f8ede5"/>
<rect x="341" y="290" width="10" height="10" fill="#e9f1ec"/>
<rect x="351" y="290" width="10" height="10" fill="#d3d5d4"/>
<rect x="361" y="290" width="10" height="10" fill="#fffdf8"/>
<rect x="371" y="290" width="10" height="10" fill="#e6ded8"/>
<rect x="381" y="290" width="10" height="10" fill="#dfe7e9"/>
<rect x="391" y="290" width="10" height="10" fill="#e8e0da"/>
<rect x="401" y="290" width="10" height="10" fill="#e6dfdc"/>
<rect x="411" y="290" width="10" height="10" fill="#dedbe8"/>
<rect x="421" y="290" width="10" height="10" fill="#eaebe3"/>
<rect x="431" y="290" width="10" height="10" fill="#e2d6ca"/>
<rect x="441" y="290" width="10" height="10" fill="#ecf2f4"/>
<rect x="308" y="300" width="192" height="10" fill="#ffffff"/>
<rect x="311" y="300" width="10" height="10" fill="#ddeefd"/>
<rect x="321" y="300" width="10" height="10" fill="#fffdfb"/>
<rect x="331" y="300" width="10" height="10" fill="#f8ede5"/>
<rect x="341" y="300" width="10" height="10" fill="#e9f1ec"/>
<rect x="351" y="300" width="10" height="10" fill="#d3d5d4"/>
<rect x="361" y="300" width="10" height="10" fill="#fffdf8"/>
<rect x="371" y="300" width="10" height="10" fill="#e6ded8"/>
<rect x="381" y="300" width="10" height="10" fill="#dfe7e9"/>
<rect x="391" y="300" width="10" height="10" fill="#e8e0da"/>
<rect x="401" y="300" width="10" height="10" fill="#e6dfdc"/>
<rect x="411" y="300" width="10" height="10" fill="#dedbe8"/>
<rect x="421" y="300" width="10" height="10" fill="#eaebe3"/>
<rect x="431" y="300" width="10" height="10" fill="#e2d6ca"/>
<rect x="441" y="300" width="10" height="10" fill="#ecf2f4"/>
<rect x="308" y="310" width="192" height="10" fill="#fbfbfb"/>
<rect x="308" y="320" width="192" height="10" fill="#fafafa"/>
<rect x="311" y="320" width="10" height="10" fill="#b3d6f7"/>
<rect x="321" y="320" width="10" height="10" fill="#dcc6b5"/>
<rect x="331" y="320" width="10" height="10" fill="#dbd2c8"/>
<rect x="341" y="320" width="10" height="10" fill="#b3c5c7"/>
<rect x="351" y="320" width="10" height="10" fill="#b0aba5"/>
<rect x="361" y="320" width="10" height="10" fill="#a2a5a6"/>
<rect x="371" y="320" width="10" height="10" fill="#e0eef8"/>
<rect x="381" y="320" width="10" height="10" fill="#eafafb"/>
<rect x="391" y="320" width="10" height="10" fill="#f6fafb"/>
<rect x="401" y="320" width="10" height="10" fill="#faf8f6"/>
<rect x="411" y="320" width="10" height="10" fill="#fbf6ef"/>
<rect x="421" y="320" width="10" height="10" fill="#e3dbd0"/>
<rect x="431" y="320" width="10" height="10" fill="#a1a19c"/>
<rect x="451" y="320" width="10" height="10" fill="#f6fafb"/>
<rect x="308" y="330" width="192" height="10" fill="#fafafa"/>
<rect x="311" y="330" width="10" height="10" fill="#e7e7ea"/>
<rect x="321" y="330" width="10" height="10" fill="#f9f9f9"/>
<rect x="331" y="330" width="10" height="10" fill="#f1f3f5"/>
<rect x="341" y="330" width="10" height="10" fill="#f1f3f5"/>
<rect x="351" y="330" width="10" height="10" fill="#f8f8f8"/>
<rect x="411" y="330" width="10" height="10" fill="#fcf6f0"/>
<rect x="308" y="340" width="192" height="10" fill="#fdfdfd"/>
<rect x="311" y="340" width="10" height="10" fill="#f3f3f3"/>
<rect x="331" y="340" width="10" height="10" fill="#fdfbf8"/>
<rect x="341" y="340" width="10" height="10" fill="#fdfbf8"/>
<rect x="308" y="350" width="192" height="10" fill="#ffffff"/>
<rect x="311" y="350" width="10" height="10" fill="#b5d8f8"/>
<rect x="321" y="350" width="10" height="10" fill="#a599c0"/>
<rect x="331" y="350" width="10" height="10" fill="#fff9f3"/>
<rect x="341" y="350" width="10" height="10" fill="#dec9ad"/>
<rect x="351" y="350" width="10" height="10" fill="#c4a887"/>
<rect x="361" y="350" width="10" height="10" fill="#b8d3d3"/>
<rect x="371" y="350" width="10" height="10" fill="#c6cac8"/>
<rect x="381" y="350" width="10" height="10" fill="#d6cdc0"/>
<rect x="391" y="350" width="10" height="10" fill="#c7e5f4"/>
<rect x="401" y="350" width="10" height="10" fill="#f2eddd"/>
<rect x="411" y="350" width="10" height="10" fill="#9d9490"/>
<rect x="421" y="350" width="10" height="10" fill="#c0b6b1"/>
<rect x="431" y="350" width="10" height="10" fill="#80a9d0"/>
<rect x="441" y="350" width="10" height="10" fill="#fff8eb"/>
<rect x="308" y="360" width="192" height="10" fill="#fdfdfd"/>
<rect x="308" y="370" width="192" height="10" fill="#fafafa"/>
<rect x="311" y="370" width="10" height="10" fill="#dbeafb"/>
<rect x="321" y="370" width="10" height="10" fill="#eaf5fd"/>
<rect x="331" y="370" width="10" height="10" fill="#f3efea"/>
<rect x="341" y="370" width="10" height="10" fill="#dbd0d4"/>
<rect x="351" y="370" width="10" height="10" fill="#ede4de"/>
<rect x="361" y="370" width="10" height="10" fill="#eee8e2"/>
<rect x="371" y="370" width="10" height="10" fill="#dcdcde"/>
<rect x="381" y="370" width="10" height="10" fill="#f0f0f0"/>
<rect x="391" y="370" width="10" height="10" fill="#faf9f6"/>
<rect x="308" y="380" width="192" height="10" fill="#fafafa"/>
<rect x="311" y="380" width="10" height="10" fill="#b7c8dc"/>
<rect x="321" y="380" width="10" height="10" fill="#eaf5fd"/>
<rect x="331" y="380" width="10" height="10" fill="#e6e0de"/>
<rect x="341" y="380" width="10" height="10" fill="#cbc1c5"/>
<rect x="351" y="380" width="10" height="10" fill="#ede4de"/>
<rect x="361" y="380" width="10" height="10" fill="#eee6e0"/>
<rect x="371" y="380" width="10" height="10" fill="#dcdcde"/>
<rect x="381" y="380" width="10" height="10" fill="#f0f0f0"/>
<rect x="391" y="380" width="10" height="10" fill="#faf9f6"/>
<rect x="308" y="390" width="192" height="10" fill="#e9e9e9"/>
<rect x="308" y="400" width="192" height="10" fill="#ffffff"/>
<rect x="311" y="400" width="10" height="10" fill="#7f8a9e"/>
<rect x="321" y="400" width="10" height="10" fill="#fcfbf8"/>
<rect x="331" y="400" width="10" height="10" fill="#f8f6f9"/>
<rect x="341" y="400" width="10" height="10" fill="#f8f6f9"/>
<rect x="351" y="400" width="10" height="10" fill="#eef0f5"/>
<rect x="361" y="400" width="10" height="10" fill="#f3f9fa"/>
<rect x="371" y="400" width="10" height="10" fill="#fdf8f5"/>
<rect x="381" y="400" width="10" height="10" fill="#fefdfb"/>
<rect x="391" y="400" width="10" height="10" fill="#f8f4f0"/>
<rect x="401" y="400" width="10" height="10" fill="#eef4fb"/>
<rect x="411" y="400" width="10" height="10" fill="#f1f4f9"/>
<rect x="421" y="400" width="10" height="10" fill="#f0f6fa"/>
<rect x="431" y="400" width="10" height="10" fill="#f0f7fa"/>
<rect x="441" y="400" width="10" height="10" fill="#f3f1ed"/>
<rect x="451" y="400" width="10" height="10" fill="#eff1f5"/>
<rect x="308" y="410" width="192" height="10" fill="#ffffff"/>
<rect x="311" y="410" width="10" height="10" fill="#c8e3fb"/>
<rect x="321" y="410" width="10" height="10" fill="#efe2d8"/>
<rect x="331" y="410" width="10" height="10" fill="#e4dde9"/>
<rect x="341" y="410" width="10" height="10" fill="#e4dde9"/>
<rect x="351" y="410" width="10" height="10" fill="#b2b8cf"/>
<rect x="361" y="410" width="10" height="10" fill="#d2e3e8"/>
<rect x="371" y="410" width="10" height="10" fill="#ecdfd5"/>
<rect x="381" y="410" width="10" height="10" fill="#f5ebe0"/>
<rect x="391" y="410" width="10" height="10" fill="#dccdbb"/>
<rect x="401" y="410" width="10" height="10" fill="#c7e2fb"/>
<rect x="411" y="410" width="10" height="10" fill="#dde2ee"/>
<rect x="421" y="410" width="10" height="10" fill="#c9dfe9"/>
<rect x="431" y="410" width="10" height="10" fill="#cbe6ee"/>
<rect x="441" y="410" width="10" height="10" fill="#dcd3c9"/>
<rect x="451" y="410" width="10" height="10" fill="#bfc8e0"/>
<rect x="308" y="420" width="192" height="10" fill="#fcfcfc"/>
<rect x="308" y="430" width="192" height="10" fill="#fafafa"/>
<rect x="311" y="430" width="10" height="10" fill="#b6d6f9"/>
<rect x="321" y="430" width="10" height="10" fill="#a6c8ea"/>
<rect x="331" y="430" width="10" height="10" fill="#eef2e6"/>
<rect x="341" y="430" width="10" height="10" fill="#eef2e0"/>
<rect x="351" y="430" width="10" height="10" fill="#d1b8a6"/>
<rect x="361" y="430" width="10" height="10" fill="#a991b5"/>
<rect x="371" y="430" width="10" height="10" fill="#acb2b5"/>
<rect x="381" y="430" width="10" height="10" fill="#dcdcd6"/>
<rect x="391" y="430" width="10" height="10" fill="#e2d1c0"/>
<rect x="401" y="430" width="10" height="10" fill="#b7a38e"/>
<rect x="411" y="430" width="10" height="10" fill="#b4b4b4"/>
<rect x="421" y="430" width="10" height="10" fill="#f5e6d4"/>
<rect x="431" y="430" width="10" height="10" fill="#bd9c8a"/>
<rect x="441" y="430" width="10" height="10" fill="#9797b8"/>
<rect x="451" y="430" width="10" height="10" fill="#bfe1ef"/>
<rect x="461" y="430" width="10" height="10" fill="#b5c2c8"/>
<rect x="471" y="430" width="10" height="10" fill="#a6a6b4"/>
<rect x="481" y="430" width="10" height="10" fill="#d8edf5"/>
<rect x="308" y="440" width="192" height="10" fill="#f7f7f7"/>
<rect x="311" y="440" width="10" height="10" fill="#f6f6f6"/>
<rect x="321" y="440" width="10" height="10" fill="#f6f6f6"/>
<rect x="331" y="440" width="10" height="10" fill="#f6f6f6"/>
<rect x="341" y="440" width="10" height="10" fill="#f6f6f6"/>
<rect x="351" y="440" width="10" height="10" fill="#f6f6f6"/>
<rect x="361" y="440" width="10" height="10" fill="#f6f6f6"/>
<rect x="371" y="440" width="10" height="10" fill="#f6f6f6"/>
<rect x="381" y="440" width="10" height="10" fill="#faf8f0"/>
<rect x="451" y="440" width="10" height="10" fill="#dcdcdd"/>
<rect x="461" y="440" width="10" height="10" fill="#dcdcdd"/>
<rect x="308" y="450" width="192" height="10" fill="#f1f1f1"/>
<rect x="311" y="450" width="10" height="10" fill="#c9cad0"/>
<rect x="331" y="450" width="10" height="10" fill="#efebe8"/>
<rect x="341" y="450" width="10" height="10" fill="#efebe8"/>
<rect x="308" y="460" width="192" height="6" fill="#ffffff"/>
<rect x="311" y="460" width="10" height="6" fill="#a2bedc"/>
<rect x="321" y="460" width="10" height="6" fill="#aec6d6"/>
<rect x="331" y="460" width="10" height="6" fill="#c2cfe2"/>
<rect x="341" y="460" width="10" height="6" fill="#f6e8dc"/>
<rect x="351" y="460" width="10" height="6" fill="#f6e8dc"/>
<rect x="361" y="460" width="10" height="6" fill="#b4a6c6"/>
<rect x="371" y="460" width="10" height="6" fill="#d8e8f3"/>
<rect x="381" y="460" width="10" height="6" fill="#cfcde2"/>
<rect x="391" y="460" width="10" height="6" fill="#dadad3"/>
<rect x="401" y="460" width="10" height="6" fill="#cab7a0"/>
<rect x="411" y="460" width="10" height="6" fill="#dcecf8"/>
<rect x="308" y="466" width="192" height="2" fill="#ffffff"/>
<rect x="308" y="657" width="232" height="228" fill="#fafafa"/>
<rect x="308" y="657" width="232" height="13" fill="#fafafa"/>
<rect x="311" y="660" width="10" height="10" fill="#c6e2f9"/>
<rect x="321" y="660" width="10" height="10" fill="#d2edfb"/>
<rect x="331" y="660" width="10" height="10" fill="#d2ebfa"/>
<rect x="341" y="660" width="10" height="10" fill="#efebde"/>
<rect x="351" y="660" width="10" height="10" fill="#f9f8f5"/>
<rect x="361" y="660" width="10" height="10" fill="#fbfbf8"/>
<rect x="371" y="660" width="10" height="10" fill="#f6f2ec"/>
<rect x="381" y="660" width="10" height="10" fill="#bec8dd"/>
<rect x="391" y="660" width="10" height="10" fill="#f0f2f7"/>
<rect x="401" y="660" width="10" height="10" fill="#f8f7f4"/>
<rect x="411" y="660" width="10" height="10" fill="#f6f6f2"/>
<rect x="421" y="660" width="10" height="10" fill="#f8f8f8"/>
<rect x="308" y="670" width="232" height="10" fill="#fafafa"/>
<rect x="311" y="670" width="10" height="10" fill="#687186"/>
<rect x="321" y="670" width="10" height="10" fill="#f1f8fd"/>
<rect x="331" y="670" width="10" height="10" fill="#e6e2d8"/>
<rect x="341" y="670" width="10" height="10" fill="#ece4d4"/>
<rect x="381" y="670" width="10" height="10" fill="#f0f1f5"/>
<rect x="308" y="680" width="232" height="10" fill="#fafafa"/>
<rect x="311" y="680" width="10" height="10" fill="#f5f5f5"/>
<rect x="308" y="690" width="232" height="10" fill="#ffffff"/>
<rect x="311" y="690" width="10" height="10" fill="#cddff0"/>
<rect x="321" y="690" width="10" height="10" fill="#fdfbfc"/>
<rect x="331" y="690" width="10" height="10" fill="#efe9e4"/>
<rect x="341" y="690" width="10" height="10" fill="#c0c6cb"/>
<rect x="351" y="690" width="10" height="10" fill="#efe4de"/>
<rect x="361" y="690" width="10" height="10" fill="#cfe2f4"/>
<rect x="371" y="690" width="10" height="10" fill="#dde3e3"/>
<rect x="381" y="690" width="10" height="10" fill="#dfe6ec"/>
<rect x="391" y="690" width="10" height="10" fill="#b8c2cb"/>
<rect x="401" y="690" width="10" height="10" fill="#f4e9df"/>
<rect x="411" y="690" width="10" height="10" fill="#dfe1de"/>
<rect x="421" y="690" width="10" height="10" fill="#f0f8fe"/>
<rect x="308" y="700" width="232" height="10" fill="#ffffff"/>
<rect x="311" y="700" width="10" height="10" fill="#ddeffc"/>
<rect x="321" y="700" width="10" height="10" fill="#fdfbfc"/>
<rect x="331" y="700" width="10" height="10" fill="#f6efeb"/>
<rect x="341" y="700" width="10" height="10" fill="#c8cdcf"/>
<rect x="351" y="700" width="10" height="10" fill="#efe4de"/>
<rect x="361" y="700" width="10" height="10" fill="#cfe2f4"/>
<rect x="371" y="700" width="10" height="10" fill="#dde3e3"/>
<rect x="381" y="700" width="10" height="10" fill="#dfe6ec"/>
<rect x="391" y="700" width="10" height="10" fill="#b8c2cb"/>
<rect x="401" y="700" width="10" height="10" fill="#f4e9df"/>
<rect x="411" y="700" width="10" height="10" fill="#dfe1de"/>
<rect x="421" y="700" width="10" height="10" fill="#f0f8fe"/>
<rect x="308" y="710" width="232" height="10" fill="#fafafa"/>
<rect x="308" y="719" width="232" height="10" fill="#fafafa"/>
<rect x="311" y="719" width="10" height="10" fill="#b5d8fa"/>
<rect x="321" y="719" width="10" height="10" fill="#91b6de"/>
<rect x="331" y="719" width="10" height="10" fill="#fdfaf3"/>
<rect x="341" y="719" width="10" height="10" fill="#fdfbef"/>
<rect x="351" y="719" width="10" height="10" fill="#d6bda5"/>
<rect x="361" y="719" width="10" height="10" fill="#dbc8b0"/>
<rect x="371" y="719" width="10" height="10" fill="#f7f0eb"/>
<rect x="381" y="719" width="10" height="10" fill="#cbd8e5"/>
<rect x="391" y="719" width="10" height="10" fill="#bfe4f9"/>
<rect x="401" y="719" width="10" height="10" fill="#9ba8b9"/>
<rect x="411" y="719" width="10" height="10" fill="#dfe6ea"/>
<rect x="421" y="719" width="10" height="10" fill="#d7e3ea"/>
<rect x="431" y="719" width="10" height="10" fill="#acc8e6"/>
<rect x="441" y="719" width="10" height="10" fill="#fdf9ef"/>
<rect x="308" y="729" width="232" height="10" fill="#fafafa"/>
<rect x="311" y="729" width="10" height="10" fill="#f6f6f6"/>
<rect x="308" y="739" width="232" height="10" fill="#fdfdfd"/>
<rect x="311" y="739" width="10" height="10" fill="#f3f3f3"/>
<rect x="308" y="749" width="232" height="10" fill="#ffffff"/>
<rect x="311" y="749" width="10" height="10" fill="#b5d8fb"/>
<rect x="321" y="749" width="10" height="10" fill="#fffdf8"/>
<rect x="331" y="749" width="10" height="10" fill="#e9d8c6"/>
<rect x="341" y="749" width="10" height="10" fill="#d4ded8"/>
<rect x="351" y="749" width="10" height="10" fill="#979c9b"/>
<rect x="361" y="749" width="10" height="10" fill="#fdfaf0"/>
<rect x="371" y="749" width="10" height="10" fill="#c6b5a2"/>
<rect x="381" y="749" width="10" height="10" fill="#b3c6c9"/>
<rect x="391" y="749" width="10" height="10" fill="#cfbba4"/>
<rect x="401" y="749" width="10" height="10" fill="#c1aea0"/>
<rect x="411" y="749" width="10" height="10" fill="#ada7c7"/>
<rect x="421" y="749" width="10" height="10" fill="#d1d1bd"/>
<rect x="431" y="749" width="10" height="10" fill="#bf9f86"/>
<rect x="441" y="749" width="10" height="10" fill="#d8e5ec"/>
<rect x="308" y="759" width="232" height="10" fill="#ffffff"/>
<rect x="308" y="769" width="232" height="10" fill="#fafafa"/>
<rect x="311" y="769" width="10" height="10" fill="#d8eafb"/>
<rect x="321" y="769" width="10" height="10" fill="#d3e3f2"/>
<rect x="331" y="769" width="10" height="10" fill="#fbfaf5"/>
<rect x="341" y="769" width="10" height="10" fill="#fbfbf2"/>
<rect x="351" y="769" width="10" height="10" fill="#e8dfd5"/>
<rect x="361" y="769" width="10" height="10" fill="#e2dde9"/>
<rect x="371" y="769" width="10" height="10" fill="#d3d3d5"/>
<rect x="381" y="769" width="10" height="10" fill="#ebebe8"/>
<rect x="391" y="769" width="10" height="10" fill="#f5f2eb"/>
<rect x="401" y="769" width="10" height="10" fill="#ece4dd"/>
<rect x="411" y="769" width="10" height="10" fill="#eae3de"/>
<rect x="421" y="769" width="10" height="10" fill="#fdf3ee"/>
<rect x="431" y="769" width="10" height="10" fill="#f5ebe6"/>
<rect x="441" y="769" width="10" height="10" fill="#dcdfe8"/>
<rect x="451" y="769" width="10" height="10" fill="#eaf5f8"/>
<rect x="461" y="769" width="10" height="10" fill="#dce1e3"/>
<rect x="471" y="769" width="10" height="10" fill="#e8eef6"/>
<rect x="308" y="779" width="232" height="10" fill="#fafafa"/>
<rect x="311" y="779" width="10" height="10" fill="#c9d9eb"/>
<rect x="321" y="779" width="10" height="10" fill="#d3e3f2"/>
<rect x="331" y="779" width="10" height="10" fill="#fbfaf5"/>
<rect x="341" y="779" width="10" height="10" fill="#f5f3e6"/>
<rect x="351" y="779" width="10" height="10" fill="#e8dfd5"/>
<rect x="361" y="779" width="10" height="10" fill="#e2dde9"/>
<rect x="371" y="779" width="10" height="10" fill="#d3d3d5"/>
<rect x="381" y="779" width="10" height="10" fill="#eeebe0"/>
<rect x="391" y="779" width="10" height="10" fill="#f5f2eb"/>
<rect x="401" y="779" width="10" height="10" fill="#ece4dd"/>
<rect x="411" y="779" width="10" height="10" fill="#eae3de"/>
<rect x="421" y="779" width="10" height="10" fill="#fdf3ee"/>
<rect x="431" y="779" width="10" height="10" fill="#f5ebe6"/>
<rect x="441" y="779" width="10" height="10" fill="#dcdfe8"/>
<rect x="451" y="779" width="10" height="10" fill="#ccd6d4"/>
<rect x="461" y="779" width="10" height="10" fill="#bcc3c4"/>
<rect x="471" y="779" width="10" height="10" fill="#e8eef6"/>
<rect x="308" y="789" width="232" height="10" fill="#fafafa"/>
<rect x="451" y="789" width="10" height="10" fill="#f3f3f1"/>
<rect x="461" y="789" width="10" height="10" fill="#f3f3f1"/>
<rect x="308" y="799" width="232" height="10" fill="#ffffff"/>
<rect x="311" y="799" width="10" height="10" fill="#e6eaf3"/>
<rect x="321" y="799" width="10" height="10" fill="#fffdfb"/>
<rect x="331" y="799" width="10" height="10" fill="#f3f2f6"/>
<rect x="341" y="799" width="10" height="10" fill="#e8ebf5"/>
<rect x="351" y="799" width="10" height="10" fill="#ecebf1"/>
<rect x="361" y="799" width="10" height="10" fill="#f7f9f8"/>
<rect x="371" y="799" width="10" height="10" fill="#f6f3f1"/>
<rect x="381" y="799" width="10" height="10" fill="#f7faf9"/>
<rect x="391" y="799" width="10" height="10" fill="#eef1f7"/>
<rect x="401" y="799" width="10" height="10" fill="#fffdf8"/>
<rect x="411" y="799" width="10" height="10" fill="#f8f3ed"/>
<rect x="421" y="799" width="10" height="10" fill="#f2f6f7"/>
<rect x="431" y="799" width="10" height="10" fill="#fcfdff"/>
<rect x="308" y="809" width="232" height="10" fill="#ffffff"/>
<rect x="311" y="809" width="10" height="10" fill="#c9e3fc"/>
<rect x="321" y="809" width="10" height="10" fill="#fffaf8"/>
<rect x="331" y="809" width="10" height="10" fill="#e2d6dc"/>
<rect x="341" y="809" width="10" height="10" fill="#a9b5d6"/>
<rect x="351" y="809" width="10" height="10" fill="#a0a1b8"/>
<rect x="361" y="809" width="10" height="10" fill="#dbe1e1"/>
<rect x="371" y="809" width="10" height="10" fill="#d6cdc2"/>
<rect x="381" y="809" width="10" height="10" fill="#d9e6e2"/>
<rect x="391" y="809" width="10" height="10" fill="#a9bdd3"/>
<rect x="401" y="809" width="10" height="10" fill="#fff9ef"/>
<rect x="411" y="809" width="10" height="10" fill="#dbc9b4"/>
<rect x="421" y="809" width="10" height="10" fill="#c6d3d9"/>
<rect x="431" y="809" width="10" height="10" fill="#f7fafe"/>
<rect x="308" y="819" width="232" height="10" fill="#fafafa"/>
<rect x="308" y="829" width="232" height="10" fill="#fafafa"/>
<rect x="311" y="829" width="10" height="10" fill="#b5d9fc"/>
<rect x="321" y="829" width="10" height="10" fill="#f4efea"/>
<rect x="331" y="829" width="10" height="10" fill="#f8e7d4"/>
<rect x="341" y="829" width="10" height="10" fill="#fcf5ef"/>
<rect x="351" y="829" width="10" height="10" fill="#ad9797"/>
<rect x="361" y="829" width="10" height="10" fill="#c2b39c"/>
<rect x="371" y="829" width="10" height="10" fill="#d7dfe0"/>
<rect x="381" y="829" width="10" height="10" fill="#a9b0b4"/>
<rect x="391" y="829" width="10" height="10" fill="#bab7a8"/>
<rect x="401" y="829" width="10" height="10" fill="#877b8b"/>
<rect x="411" y="829" width="10" height="10" fill="#c9e2f6"/>
<rect x="421" y="829" width="10" height="10" fill="#fdf6e6"/>
<rect x="431" y="829" width="10" height="10" fill="#c8a988"/>
<rect x="441" y="829" width="10" height="10" fill="#a4b4b3"/>
<rect x="451" y="829" width="10" height="10" fill="#eedec8"/>
<rect x="461" y="829" width="10" height="10" fill="#b0c3d6"/>
<rect x="471" y="829" width="10" height="10" fill="#eef3f7"/>
<rect x="308" y="839" width="232" height="10" fill="#f8f8f8"/>
<rect x="308" y="849" width="232" height="10" fill="#f1f1f1"/>
<rect x="311" y="849" width="10" height="10" fill="#b9bcc7"/>
<rect x="321" y="849" width="10" height="10" fill="#f0f0f0"/>
<rect x="331" y="849" width="10" height="10" fill="#dcdde0"/>
<rect x="341" y="849" width="10" height="10" fill="#dcdde0"/>
<rect x="308" y="859" width="232" height="10" fill="#ffffff"/>
<rect x="311" y="859" width="10" height="10" fill="#97b4d6"/>
<rect x="321" y="859" width="10" height="10" fill="#dccbbc"/>
<rect x="331" y="859" width="10" height="10" fill="#d1c2b1"/>
<rect x="341" y="859" width="10" height="10" fill="#bac8c9"/>
<rect x="351" y="859" width="10" height="10" fill="#f5fafe"/>
<rect x="361" y="859" width="10" height="10" fill="#fdf1e3"/>
<rect x="371" y="859" width="10" height="10" fill="#cdc7cf"/>
<rect x="381" y="859" width="10" height="10" fill="#cbdde7"/>
<rect x="391" y="859" width="10" height="10" fill="#fcfeff"/>
<rect x="401" y="859" width="10" height="10" fill="#fdfdfd"/>
<rect x="411" y="859" width="10" height="10" fill="#eeeee1"/>
<rect x="421" y="859" width="10" height="10" fill="#d8c3ab"/>
<rect x="431" y="859" width="10" height="10" fill="#c1a9a8"/>
<rect x="441" y="859" width="10" height="10" fill="#dfcfbf"/>
<rect x="451" y="859" width="10" height="10" fill="#d7d6dd"/>
<rect x="461" y="859" width="10" height="10" fill="#eff2ed"/>
<rect x="308" y="869" width="232" height="10" fill="#ffffff"/>
<rect x="311" y="869" width="10" height="10" fill="#f2f7fd"/>
<rect x="321" y="869" width="10" height="10" fill="#f8f3ef"/>
<rect x="331" y="869" width="10" height="10" fill="#f9f5ef"/>
<rect x="341" y="869" width="10" height="10" fill="#f4f6f5"/>
<rect x="351" y="869" width="10" height="10" fill="#fcfdff"/>
<rect x="361" y="869" width="10" height="10" fill="#fdfcf7"/>
<rect x="371" y="869" width="10" height="10" fill="#f3f3f3"/>
<rect x="381" y="869" width="10" height="10" fill="#f3f7fa"/>
<rect x="411" y="869" width="10" height="10" fill="#fbfcf6"/>
<rect x="421" y="869" width="10" height="10" fill="#f5f0ea"/>
<rect x="431" y="869" width="10" height="10" fill="#f2eceb"/>
<rect x="441" y="869" width="10" height="10" fill="#f8f3ef"/>
<rect x="451" y="869" width="10" height="10" fill="#f5f4f6"/>
<rect x="461" y="869" width="10" height="10" fill="#fafafa"/>
<rect x="308" y="879" width="232" height="6" fill="#fafafa"/>
<rect x="314" y="465.8" width="1.3" height="2" fill="#5a5a6a"/>
<rect x="318.5" y="465.8" width="1.3" height="2" fill="#5a5a6a"/>
<rect x="321" y="465.8" width="1.3" height="2" fill="#5a5a6a"/>
<rect x="326" y="465.8" width="1.3" height="2" fill="#5a5a6a"/>
<rect x="330" y="465.8" width="1.3" height="2" fill="#5a5a6a"/>
<rect x="335" y="465.8" width="1.3" height="2" fill="#5a5a6a"/>
<rect x="341" y="465.8" width="1.3" height="2" fill="#5a5a6a"/>
<rect x="348" y="465.8" width="1.3" height="2" fill="#5a5a6a"/>
<rect x="353" y="465.8" width="1.3" height="2" fill="#5a5a6a"/>
<rect x="356" y="465.8" width="1.3" height="2" fill="#5a5a6a"/>
<rect x="360" y="465.8" width="1.3" height="2" fill="#5a5a6a"/>
<rect x="362.5" y="465.8" width="1.3" height="2" fill="#5a5a6a"/>
<rect x="366" y="465.8" width="1.3" height="2" fill="#5a5a6a"/>
<rect x="369" y="465.8" width="1.3" height="2" fill="#5a5a6a"/>
<rect x="373" y="465.8" width="1.3" height="2" fill="#5a5a6a"/>
<rect x="382" y="465.8" width="1.3" height="2" fill="#5a5a6a"/>
<rect x="385" y="465.8" width="1.3" height="2" fill="#5a5a6a"/>
<rect x="389" y="465.8" width="1.3" height="2" fill="#5a5a6a"/>
<rect x="393" y="465.8" width="1.3" height="2" fill="#5a5a6a"/>
<rect x="396" y="465.8" width="1.3" height="2" fill="#5a5a6a"/>
<rect x="399" y="465.8" width="1.3" height="2" fill="#5a5a6a"/>
<rect x="402" y="465.8" width="1.3" height="2" fill="#5a5a6a"/>
<rect x="406" y="465.8" width="1.3" height="2" fill="#5a5a6a"/>
<rect x="409" y="465.8" width="1.3" height="2" fill="#5a5a6a"/>
<rect x="412" y="465.8" width="1.3" height="2" fill="#5a5a6a"/>
<rect x="416" y="465.8" width="1.3" height="2" fill="#5a5a6a"/>
<rect x="419" y="465.8" width="1.3" height="2" fill="#5a5a6a"/>
<rect x="423" y="465.8" width="1.3" height="2" fill="#5a5a6a"/>
</svg>
</body></html>
